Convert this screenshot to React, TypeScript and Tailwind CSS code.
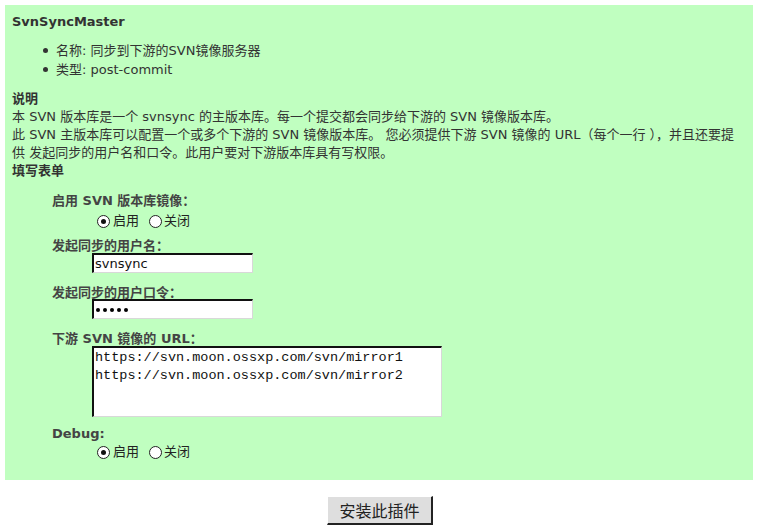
import React from "react";

const font = { fontFamily: '"DejaVu Sans", "Noto Sans CJK SC", sans-serif' };
const cjk = { fontFamily: '"Noto Sans CJK SC", sans-serif' };

function Radio({ checked }: { checked: boolean }) {
  return (
    <span className="flex h-[13px] w-[13px] items-center justify-center rounded-full border border-[#222] bg-white">
      {checked && <span className="h-[5px] w-[5px] rounded-full bg-[#111]" />}
    </span>
  );
}

function RadioRow({ className }: { className: string }) {
  return (
    <div className={className + " flex h-[18px] items-center pl-[45px] text-[13px] leading-[18px] text-[#222]"}>
      <Radio checked />
      <span className="ml-[3px]">启用</span>
      <span className="ml-[10px] flex items-center">
        <Radio checked={false} />
      </span>
      <span className="ml-[2px]">关闭</span>
    </div>
  );
}

const inputBox =
  "flex h-[20px] w-[161px] items-center border-b border-l-2 border-r border-t-2 border-b-[#d8d8d8] border-l-[#111] border-r-[#d8d8d8] border-t-[#111] bg-white";

export default function App() {
  return (
    <div className="min-h-[532px] bg-white text-[#333]" style={font}>
      <div className="ml-[5px] mt-[5px] w-[748px] bg-[#c0ffc0] pb-[19px] pl-[7px] pt-[8px]">
        <div className="text-[13px] font-bold leading-[18px]">SvnSyncMaster</div>
        <div className="mt-[10px] text-[13px] leading-[19px]">
          <div className="flex items-center">
            <span className="ml-[31px] h-[5px] w-[5px] rounded-full bg-[#333]" />
            <span className="ml-[8px]">名称: 同步到下游的SVN镜像服务器</span>
          </div>
          <div className="flex items-center">
            <span className="ml-[31px] h-[5px] w-[5px] rounded-full bg-[#333]" />
            <span className="ml-[8px]">类型: post-commit</span>
          </div>
        </div>
        <div className="mt-[11px] text-[13px] font-bold leading-[18px]">说明</div>
        <div className="text-[13px] leading-[18px]">
          <div>本 SVN 版本库是一个 svnsync 的主版本库。每一个提交都会同步给下游的 SVN 镜像版本库。</div>
          <div>此 SVN 主版本库可以配置一个或多个下游的 SVN 镜像版本库。 您必须提供下游 SVN 镜像的 URL（每个一行 ），并且还要提</div>
          <div>供 发起同步的用户名和口令。此用户要对下游版本库具有写权限。</div>
        </div>
        <div className="text-[13px] font-bold leading-[18px]">填写表单</div>

        <div className="mt-[12px] pl-[40px]">
          <div className="text-[13px] font-bold leading-[18px] text-[#444]">启用 SVN 版本库镜像：</div>
          <RadioRow className="mt-[2px]" />

          <div className="mt-[7px] text-[13px] font-bold leading-[18px] text-[#444]">发起同步的用户名：</div>
          <div className="-mt-[2px] pl-[40px]">
            <div className={inputBox + " pl-[1px] text-[13px] text-[#111]"}>svnsync</div>
          </div>

          <div className="mt-[11px] text-[13px] font-bold leading-[18px] text-[#444]">发起同步的用户口令：</div>
          <div className="-mt-[3px] pl-[40px]">
            <div className={inputBox + " gap-[3px] pl-[2px]"}>
              <span className="h-[4px] w-[4px] rounded-full bg-black" />
              <span className="h-[4px] w-[4px] rounded-full bg-black" />
              <span className="h-[4px] w-[4px] rounded-full bg-black" />
              <span className="h-[4px] w-[4px] rounded-full bg-black" />
              <span className="h-[4px] w-[4px] rounded-full bg-black" />
            </div>
          </div>

          <div className="mt-[11px] text-[13px] font-bold leading-[18px] text-[#444]">下游 SVN 镜像的 URL：</div>
          <div className="-mt-[2px] pl-[40px]">
            <div
              className="h-[71px] w-[350px] border-b border-l-2 border-r border-t-2 border-b-[#d8d8d8] border-l-[#111] border-r-[#d8d8d8] border-t-[#111] bg-white pl-[1px] pt-[1px] text-[13.5px] leading-[18px] text-[#111]"
              style={{ fontFamily: '"Liberation Mono", monospace' }}
            >
              <div>https://svn.moon.ossxp.com/svn/mirror1</div>
              <div>https://svn.moon.ossxp.com/svn/mirror2</div>
            </div>
          </div>

          <div className="mt-[8px] text-[13px] font-bold leading-[18px] text-[#444]">Debug:</div>
          <RadioRow className="mt-0" />
        </div>
      </div>

      <div className="mt-[16px] flex justify-center">
        <button
          className="h-[29px] w-[106px] border-b-2 border-l border-r-2 border-t border-b-[#222] border-l-white border-r-[#222] border-t-white bg-[#dedede] text-[16px] text-[#222]"
          style={cjk}
        >
          安装此插件
        </button>
      </div>
    </div>
  );
}
